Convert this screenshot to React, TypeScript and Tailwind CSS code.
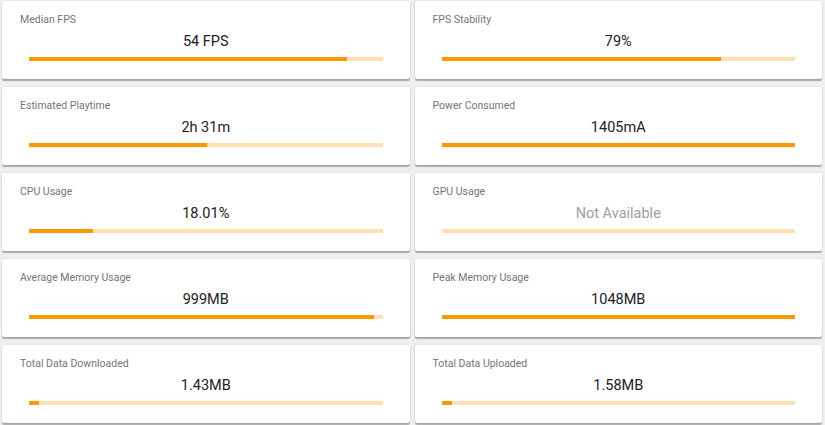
import type { ReactNode } from "react";

type Metric = {
    label: string;
    value: string;
    percent: number;
    unavailable?: boolean;
};

const metrics: Metric[] = [
    { label: "Median FPS", value: "54 FPS", percent: 90 },
    { label: "FPS Stability", value: "79%", percent: 79 },
    { label: "Estimated Playtime", value: "2h 31m", percent: 50.3 },
    { label: "Power Consumed", value: "1405mA", percent: 100 },
    { label: "CPU Usage", value: "18.01%", percent: 18 },
    { label: "GPU Usage", value: "Not Available", percent: 0, unavailable: true },
    { label: "Average Memory Usage", value: "999MB", percent: 97.6 },
    { label: "Peak Memory Usage", value: "1048MB", percent: 100 },
    { label: "Total Data Downloaded", value: "1.43MB", percent: 2.7 },
    { label: "Total Data Uploaded", value: "1.58MB", percent: 3 },
];

function Card({ children }: { children: ReactNode }) {
    return (
        <div className="h-[78px] bg-white rounded-[2px] shadow-[0_2px_1px_rgba(0,0,0,0.28),0_0_2px_rgba(0,0,0,0.12)] px-[18px] pt-[12px]">
            {children}
        </div>
    );
}

function ProgressBar({ percent }: { percent: number }) {
    return (
        <div className="mx-[9px] h-[4px] bg-[#ffe0b2]">
            <div className="h-full bg-[#ff9800]" style={{ width: `${percent}%` }} />
        </div>
    );
}

function MetricCard({ metric }: { metric: Metric }) {
    return (
        <Card>
            <div className="text-[10.5px] leading-[14px] text-[#757575]">{metric.label}</div>
            <div
                className={
                    metric.unavailable
                        ? "text-center text-[14.5px] leading-[18px] mt-[6px] mb-[6px] text-[#9e9e9e]"
                        : "text-center text-[14.5px] leading-[18px] mt-[6px] mb-[6px] text-[#212121]"
                }
            >
                {metric.value}
            </div>
            <ProgressBar percent={metric.percent} />
        </Card>
    );
}

export default function App() {
    return (
        <div
            className="w-[825px] h-[425px] bg-[#efefef] pl-[2px] pr-[3px] pt-[1px]"
            style={{ fontFamily: "Roboto, 'Liberation Sans', sans-serif" }}
        >
            <div className="grid grid-cols-2 gap-x-[5px] gap-y-[8px]">
                {metrics.map((m) => (
                    <MetricCard key={m.label} metric={m} />
                ))}
            </div>
        </div>
    );
}
